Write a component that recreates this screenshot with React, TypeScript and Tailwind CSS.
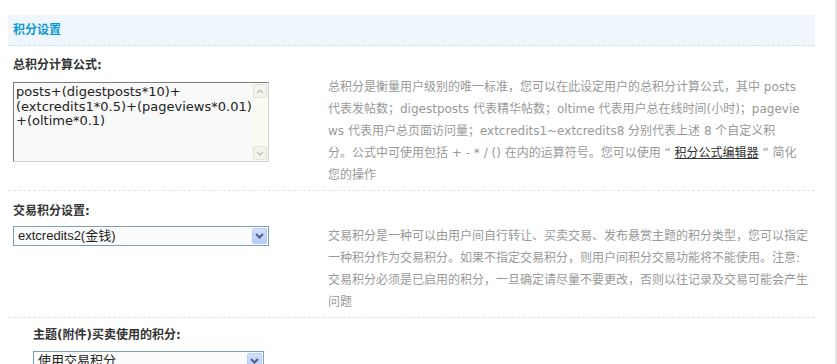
import { FC, ReactNode } from 'react'

const totalTips: ReactNode[] = [
  '总积分是衡量用户级别的唯一标准，您可以在此设定用户的总积分计算公式，其中 posts',
  '代表发帖数；digestposts 代表精华帖数；oltime 代表用户总在线时间(小时)；pagevie',
  'ws 代表用户总页面访问量；extcredits1~extcredits8 分别代表上述 8 个自定义积',
  <>
    分。公式中可使用包括 + - * / () 在内的运算符号。您可以使用 “{' '}
    <a href="#" className="text-[#333] underline">积分公式编辑器</a> ” 简化
  </>,
  '您的操作',
]

const tradeTips: ReactNode[] = [
  '交易积分是一种可以由用户间自行转让、买卖交易、发布悬赏主题的积分类型，您可以指定',
  '一种积分作为交易积分。如果不指定交易积分，则用户间积分交易功能将不能使用。注意:',
  '交易积分必须是已启用的积分，一旦确定请尽量不要更改，否则以往记录及交易可能会产生',
  '问题',
]

const Tips: FC<{ lines: ReactNode[] }> = ({ lines }) => (
  <div className="text-[12px] leading-[22px] text-[#999] whitespace-nowrap">
    {lines.map((line, i) => (
      <div key={i}>{line}</div>
    ))}
  </div>
)

const Label: FC<{ children: ReactNode }> = ({ children }) => (
  <div className="text-[12px] leading-[14px] font-bold text-[#333]">{children}</div>
)

const ScrollArrow: FC<{ down?: boolean }> = ({ down }) => (
  <div className="w-[14px] h-[14px] border border-[#e2e2da] bg-[#f4f4ee] rounded-[2px] flex items-center justify-center">
    <svg width="8" height="5" viewBox="0 0 8 5">
      <path
        d={down ? 'M1 1 L4 4 L7 1' : 'M1 4 L4 1 L7 4'}
        stroke="#c4c4bc"
        strokeWidth="1.5"
        fill="none"
      />
    </svg>
  </div>
)

const FakeSelect: FC<{ value: string; width: string }> = ({ value, width }) => (
  <div className={`${width} h-[20px] border border-[#7f9db9] bg-[#fcfcfc] flex items-center justify-between pl-[4px] pr-[1px]`}>
    <span className="text-[13px] text-[#222] font-['Liberation_Sans','Noto_Sans_CJK_SC',sans-serif]">{value}</span>
    <div className="w-[15px] h-[16px] rounded-[2px] border border-[#b9cbf6] bg-gradient-to-b from-[#d3e0fd] to-[#b7cbf8] flex items-center justify-center">
      <svg width="9" height="6" viewBox="0 0 9 6">
        <path d="M1 1 L4.5 4.5 L8 1" stroke="#4d6185" strokeWidth="2" fill="none" />
      </svg>
    </div>
  </div>
)

const App: FC = () => {
  return (
    <div className="w-full h-[364px] overflow-hidden bg-white flex font-['DejaVu_Sans','Noto_Sans_CJK_SC',sans-serif]">
      <div className="flex-1 pt-[15px] pl-2">
        <div className="w-[807px] h-[31px] bg-[#eff6fe] border-b border-dashed border-[#c4e2f6] flex items-center pl-[5px]">
          <h3 className="text-[12px] font-bold text-[#0a99cf]">积分设置</h3>
        </div>

        <div className="w-[807px] pl-[5px] pb-[4px]">
          <div className="mt-[12px]">
            <Label>总积分计算公式:</Label>
          </div>
          <div className="flex items-start mt-[4px]">
            <div className="w-[315px] pt-[6px]">
              <div className="w-[256px] h-[80px] flex border border-t-[#7c7c7c] border-l-[#7c7c7c] border-r-[#d0d0d0] border-b-[#d0d0d0] bg-[#f9f9f9]">
                <div className="flex-1 pl-[2px] pt-[2px] text-[13px] leading-[14.5px] text-[#222] whitespace-nowrap">
                  <div>posts+(digestposts*10)+</div>
                  <div>(extcredits1*0.5)+(pageviews*0.01)</div>
                  <div>+(oltime*0.1)</div>
                </div>
                <div className="w-[15px] bg-[#fbfbf4] flex flex-col justify-between py-[1px]">
                  <ScrollArrow />
                  <ScrollArrow down />
                </div>
              </div>
            </div>
            <Tips lines={totalTips} />
          </div>
        </div>

        <div className="w-[807px] pl-[5px] pb-[4px] border-t border-dashed border-[#dde4ec]">
          <div className="mt-[13px]">
            <Label>交易积分设置:</Label>
          </div>
          <div className="flex items-start mt-[7px]">
            <div className="w-[315px] pt-[1px]">
              <FakeSelect value="extcredits2(金钱)" width="w-[256px]" />
            </div>
            <Tips lines={tradeTips} />
          </div>
        </div>

        <div className="w-[807px] pl-[25px] border-t border-dashed border-[#dde4ec]">
          <div className="mt-[10px]">
            <Label>主题(附件)买卖使用的积分:</Label>
          </div>
          <div className="mt-[9px]">
            <FakeSelect value="使用交易积分" width="w-[231px]" />
          </div>
        </div>
      </div>
      <div className="w-[2px] bg-[#e6e6e2]" />
    </div>
  )
}

export default App
